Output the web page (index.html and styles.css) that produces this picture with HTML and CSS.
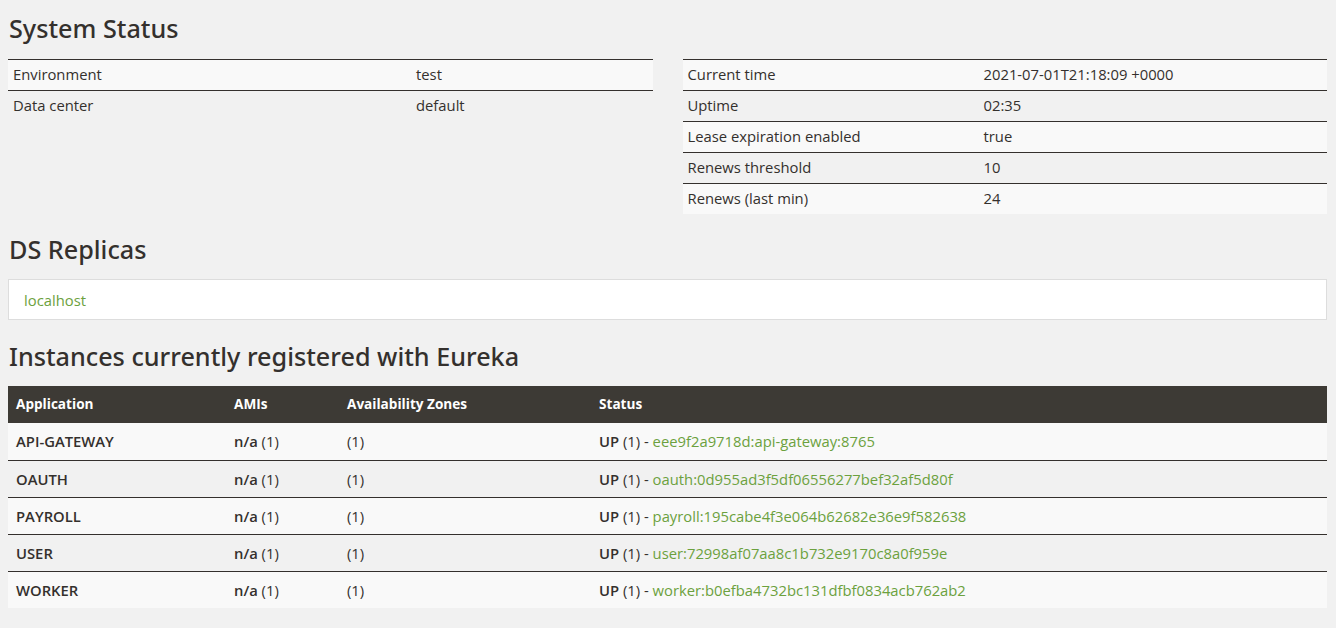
FILE: index.html
```html
<!DOCTYPE html>
<html>
<head>
<meta charset="utf-8">
<title>Eureka</title>
<link rel="stylesheet" href="styles.css">
</head>
<body>
<div class="page">
  <h1 class="title first">System Status</h1>
  <div class="cols">
    <table class="kv kv-left">
      <tr><td class="k">Environment</td><td>test</td></tr>
      <tr><td class="k">Data center</td><td>default</td></tr>
    </table>
    <table class="kv kv-right">
      <tr><td class="k">Current time</td><td>2021-07-01T21:18:09 +0000</td></tr>
      <tr><td class="k">Uptime</td><td>02:35</td></tr>
      <tr><td class="k">Lease expiration enabled</td><td>true</td></tr>
      <tr><td class="k">Renews threshold</td><td>10</td></tr>
      <tr><td class="k">Renews (last min)</td><td>24</td></tr>
    </table>
  </div>

  <h1 class="title replicas-title">DS Replicas</h1>
  <div class="replicas">
    <a class="link" href="#">localhost</a>
  </div>

  <h1 class="title">Instances currently registered with Eureka</h1>
  <table class="instances">
    <thead>
      <tr><th class="c-app">Application</th><th class="c-ami">AMIs</th><th class="c-az">Availability Zones</th><th>Status</th></tr>
    </thead>
    <tbody>
      <tr><td class="app">API-GATEWAY</td><td><b>n/a</b> (1)</td><td>(1)</td><td><b>UP</b> (1) - <a class="link" href="#">eee9f2a9718d:api-gateway:8765</a></td></tr>
      <tr><td class="app">OAUTH</td><td><b>n/a</b> (1)</td><td>(1)</td><td><b>UP</b> (1) - <a class="link" href="#">oauth:0d955ad3f5df06556277bef32af5d80f</a></td></tr>
      <tr><td class="app">PAYROLL</td><td><b>n/a</b> (1)</td><td>(1)</td><td><b>UP</b> (1) - <a class="link" href="#">payroll:195cabe4f3e064b62682e36e9f582638</a></td></tr>
      <tr><td class="app">USER</td><td><b>n/a</b> (1)</td><td>(1)</td><td><b>UP</b> (1) - <a class="link" href="#">user:72998af07aa8c1b732e9170c8a0f959e</a></td></tr>
      <tr><td class="app">WORKER</td><td><b>n/a</b> (1)</td><td>(1)</td><td><b>UP</b> (1) - <a class="link" href="#">worker:b0efba4732bc131dfbf0834acb762ab2</a></td></tr>
    </tbody>
  </table>
</div>
</body>
</html>
```
FILE: styles.css
```css
html, body {
  margin: 0;
  padding: 0;
  background: #f1f1f1;
}
body {
  font-family: "Open Sans", "Liberation Sans", sans-serif;
  font-size: 14.8px;
  color: #34302d;
}
b { font-weight: 600; }
.page {
  padding: 0 9px 20px 8px;
}
.title {
  font-family: "Noto Sans", "Open Sans", sans-serif;
  font-weight: 500;
  font-size: 25.2px;
  line-height: 26px;
  margin: 23px 0 17px 1px;
  color: #34302d;
}
.title.first {
  margin-top: 15px;
  margin-bottom: 18px;
}
.title.replicas-title {
  margin-top: 22px;
}
.cols {
  display: flex;
  gap: 30px;
  align-items: flex-start;
}
.kv {
  flex: 1;
  border-collapse: separate;
  border-spacing: 0;
}
.kv td {
  line-height: 20px;
  padding: 4px 5px 6px;
  border-top: 1px solid #34302d;
}
.kv tr:nth-child(odd) td {
  background: #f9f9f9;
}
.kv-left .k { width: 393px; }
.kv-right .k { width: 286px; }

.replicas {
  background: #fff;
  border: 1px solid #ddd;
  height: 39px;
  display: flex;
  align-items: center;
  padding-left: 15px;
}
.link {
  color: #6ca13e;
  text-decoration: none;
}
.instances {
  width: 100%;
  border-collapse: separate;
  border-spacing: 0;
}
.instances th {
  background: #3d3a35;
  color: #fff;
  font-weight: 700;
  font-size: 13.6px;
  text-align: left;
  line-height: 20px;
  padding: 8px 8px 9px;
}
.instances td {
  line-height: 20px;
  padding: 8px 8px 8px;
  border-top: 1px solid #34302d;
}
.instances tbody tr:first-child td {
  border-top: none;
  padding-top: 8px;
  padding-bottom: 9px;
}
.instances tbody tr:nth-child(odd) td {
  background: #f9f9f9;
}
.c-app { width: 202px; }
.c-ami { width: 97px; }
.c-az { width: 236px; }
.app { font-weight: 600; }
```
